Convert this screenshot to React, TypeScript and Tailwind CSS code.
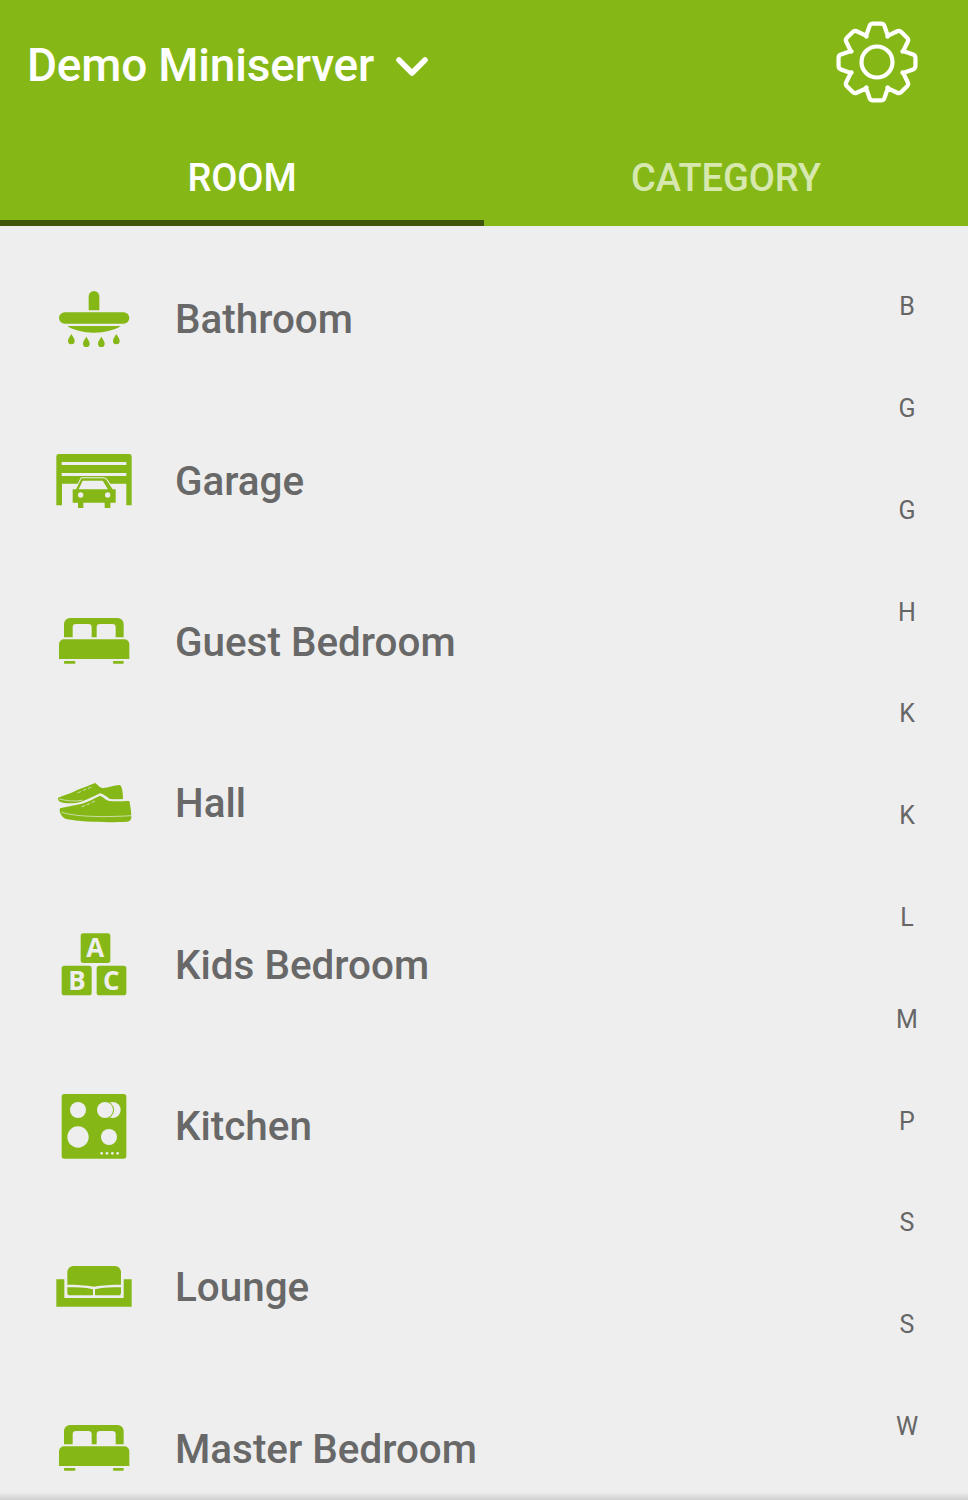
import React from "react";

const G = "#85b816";
const BG = "#eeeeee";

function Icon({ vb, children }: { vb: string; children: React.ReactNode }) {
  return (
    <svg viewBox={vb} className="w-20 h-20 shrink-0" fill={G}>
      {children}
    </svg>
  );
}

const drop = (x: number, y: number) => (
  <path key={x} d={`M${x} ${y}c5 9 10 14 10 21a10 10 0 0 1-20 0c0-7 5-12 10-21z`} />
);

const Shower = () => (
  <Icon vb="42 27 240 240">
    <path d="M146 118V76a16 16 0 0 1 32 0v42z" />
    <rect x="57" y="124" width="211" height="34" rx="17" />
    <path d="M82 165h160c-16 12-48 20-80 20s-64-8-80-20z" />
    {drop(94, 189)}
    {drop(139, 197)}
    {drop(184, 197)}
    {drop(229, 189)}
  </Icon>
);

const Garage = () => (
  <Icon vb="42 513 240 240">
    <path d="M56 552h212a7 7 0 0 1 7 7v147h-16v-65H66v65H49V559a7 7 0 0 1 7-7z" />
    <rect x="65" y="576" width="194" height="9" fill={BG} />
    <rect x="65" y="609" width="194" height="9" fill={BG} />
    <path
      d="M125 625h65c6 0 9 3 11 7l17 26h9v40h-16v16h-17v-16h-64v16h-16v-16H98v-40h10l13-26c1-4 2-7 4-7z"
      stroke={BG}
      strokeWidth="6"
      paintOrder="stroke"
    />
    <path d="M128 632h60l16 26H116z" fill={BG} />
    <circle cx="122" cy="675" r="8" fill={BG} />
    <circle cx="203" cy="675" r="8" fill={BG} />
  </Icon>
);

const Bed = ({ vb }: { vb: string }) => (
  <Icon vb={vb}>
    <path
      fillRule="evenodd"
      d="M72 112V72a18 18 0 0 1 18-18h143a18 18 0 0 1 18 18v40h-24V82a10 10 0 0 0-10-10h-37a10 10 0 0 0-10 10v30h-15V82a10 10 0 0 0-10-10h-37a10 10 0 0 0-10 10v30z"
    />
    <path d="M72 118h181a15 15 0 0 1 15 15v44H57v-44a15 15 0 0 1 15-15z" />
    <rect x="72" y="183" width="34" height="8" rx="2" />
    <rect x="219" y="183" width="32" height="8" rx="2" />
  </Icon>
);

const Shoes = () => (
  <Icon vb="12 -35 240 240">
    <path d="M24 66C45 58 65 52 80 44C100 36 120 28 136 22C142 26 146 34 156 37C172 39 190 28 210 28C217 34 219 52 219 70C205 71 190 71 178 69C168 62 160 54 150 53C135 60 112 72 94 78C72 84 45 84 30 78C25 75 23 70 24 66z" />
    <path
      d="M30 98C55 92 78 88 96 84C115 78 135 68 150 60C158 62 166 73 178 76C195 78 220 76 238 76C241 90 244 110 244 126C243 132 239 137 232 138C180 141 100 140 48 130C36 126 26 110 30 98z"
      stroke={BG}
      strokeWidth="9"
      paintOrder="stroke"
    />
    <g fill="none" stroke={BG} strokeWidth="2" strokeLinecap="round">
      <path d="M28 70C50 76 75 78 96 74" />
      <path d="M36 110C70 122 150 126 243 120" />
      <path d="M84 51l8-3M100 44l8-3M115 38l8-3M96 93l8-3M111 87l8-3M126 80l8-3" />
    </g>
  </Icon>
);

const Blocks = () => (
  <Icon vb="42 13 240 240">
    <rect x="122" y="38" width="89" height="89" rx="8" />
    <rect x="65" y="135" width="90" height="89" rx="8" />
    <rect x="170" y="135" width="89" height="89" rx="8" />
    <g fill={BG} fontFamily="'Open Sans', sans-serif" fontWeight="700" fontSize="78" textAnchor="middle">
      <text x="166" y="109">A</text>
      <text x="111" y="207">B</text>
      <text x="214" y="207">C</text>
    </g>
  </Icon>
);

const Kitchen = () => (
  <Icon vb="42 498 240 240">
    <rect x="65" y="522" width="194" height="194" rx="8" />
    <g fill={BG}>
      <circle cx="114" cy="570" r="24" />
      <circle cx="218" cy="570" r="24" />
      <circle cx="195" cy="570" r="27" fill={G} />
      <circle cx="195" cy="570" r="24" />
      <circle cx="114" cy="651" r="32" />
      <circle cx="207" cy="651" r="24" />
      <circle cx="185" cy="700" r="4" />
      <circle cx="201" cy="700" r="4" />
      <circle cx="217" cy="700" r="4" />
      <circle cx="233" cy="700" r="4" />
    </g>
  </Icon>
);

const Lounge = () => (
  <Icon vb="42 -9 240 240">
    <path d="M100 48h125a18 18 0 0 1 18 18v38c-26 0-58 1-81 6-23-5-54-6-80-6V66a18 18 0 0 1 18-18z" />
    <path d="M82 112c26 0 52 0 77 6v18H90a8 8 0 0 1-8-8z" />
    <path d="M243 112c-26 0-52 0-78 6v18h70a8 8 0 0 0 8-8z" />
    <path d="M49 88h24v56h178V88h24v82H49z" />
  </Icon>
);

function gearPath() {
  const cx = 41;
  const cy = 41;
  const pts: [number, number][] = [];
  for (let i = 0; i < 8; i++) {
    const a = (i * Math.PI) / 4;
    for (const [r, d] of [
      [27.5, -0.42],
      [39, -0.17],
      [39, 0.17],
      [27.5, 0.42],
    ]) {
      pts.push([cx + r * Math.sin(a + d), cy - r * Math.cos(a + d)]);
    }
  }
  const toward = (p: [number, number], q: [number, number], t: number) => {
    const dx = q[0] - p[0];
    const dy = q[1] - p[1];
    const len = Math.hypot(dx, dy);
    const k = Math.min(t, len / 2) / len;
    return [p[0] + dx * k, p[1] + dy * k];
  };
  let d = "";
  pts.forEach((p, i) => {
    const prev = pts[(i + pts.length - 1) % pts.length];
    const next = pts[(i + 1) % pts.length];
    const s = toward(p, prev, 2.5);
    const e = toward(p, next, 2.5);
    d += `${i === 0 ? "M" : "L"}${s[0].toFixed(2)} ${s[1].toFixed(2)}Q${p[0].toFixed(2)} ${p[1].toFixed(2)} ${e[0].toFixed(2)} ${e[1].toFixed(2)}`;
  });
  return d + "z";
}

const rooms = [
  { name: "Bathroom", icon: <Shower /> },
  { name: "Garage", icon: <Garage /> },
  { name: "Guest Bedroom", icon: <Bed vb="42 6 240 240" /> },
  { name: "Hall", icon: <Shoes /> },
  { name: "Kids Bedroom", icon: <Blocks /> },
  { name: "Kitchen", icon: <Kitchen /> },
  { name: "Lounge", icon: <Lounge /> },
  { name: "Master Bedroom", icon: <Bed vb="42 6 240 240" /> },
];

const letters = ["B", "G", "G", "H", "K", "K", "L", "M", "P", "S", "S", "W"];

export default function App() {
  return (
    <div className="relative w-[968px] h-[1500px] overflow-hidden bg-[#eeeeee] font-['Roboto',sans-serif] flex flex-col">
      <header className="h-[226px] shrink-0 bg-[#85b816] flex flex-col">
        <div className="h-[130px] flex items-center justify-between pl-[27px] pr-[50px]">
          <div className="flex items-center gap-[22px]">
            <span className="text-white text-[46px] tracking-[-0.2px] leading-none font-medium">Demo Miniserver</span>
            <svg width="32" height="20" viewBox="0 0 32 20" className="mt-1" fill="none" stroke="white" strokeWidth="5.5" strokeLinecap="round" strokeLinejoin="round">
              <path d="M3 3l13 13L29 3" />
            </svg>
          </div>
          <svg width="82" height="82" viewBox="0 0 82 82" className="-mt-[6px]" fill="none" stroke="white" strokeWidth="4.2" strokeLinejoin="round">
            <circle cx="41" cy="41" r="15.5" />
            <path d={gearPath()} />
          </svg>
        </div>
        <nav className="flex-1 flex">
          <div className="w-1/2 flex items-start justify-center pt-[26px] border-b-[6px] border-[#3f5508]">
            <span className="text-white text-[38px] leading-[44px] tracking-[-0.1px] font-medium">ROOM</span>
          </div>
          <div className="w-1/2 flex items-start justify-center pt-[26px]">
            <span className="text-[#d6e8ae] text-[38px] leading-[44px] tracking-[-0.1px] font-medium">CATEGORY</span>
          </div>
        </nav>
      </header>
      <main className="flex-1 flex min-h-0">
        <ul className="flex-1 pt-[13px]">
          {rooms.map((r) => (
            <li key={r.name} className="h-[161.3px] flex items-center pl-[54px] gap-[41px]">
              {r.icon}
              <span className="text-[40.4px] leading-none font-medium text-[#686868] mt-[2px]">{r.name}</span>
            </li>
          ))}
        </ul>
        <ul className="w-[122px] shrink-0 pt-[30px]">
          {letters.map((l, i) => (
            <li key={i} className="h-[101.8px] flex items-center justify-center text-[25px] text-[#666666]">
              {l}
            </li>
          ))}
        </ul>
      </main>
      <div className="absolute left-0 right-0 bottom-0 h-2 bg-gradient-to-b from-transparent to-[#cfcfcf]" />
    </div>
  );
}
